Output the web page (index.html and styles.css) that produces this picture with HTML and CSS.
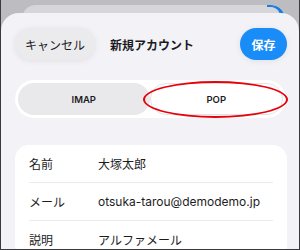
FILE: index.html
```html
<!DOCTYPE html>
<html lang="ja">
<head>
  <meta charset="UTF-8" />
  <title>新規アカウント</title>
  <meta name="viewport" content="width=device-width, initial-scale=1" />
  <link rel="stylesheet" href="styles.css">
</head>
<body>

  <div class="frame">
    <div class="backsheet">
      <span class="back-save"></span>
    </div>

    <div class="sheet">
      <div class="header">
        <button class="pill cancel">キャンセル</button>
        <h1 class="title">新規アカウント</h1>
        <button class="pill save">保存</button>
      </div>

      <div class="segmented">
        <div class="seg">IMAP</div>
        <div class="seg selected">POP</div>
        <span class="mark"></span>
      </div>

      <div class="card">
        <div class="row">
          <span class="label">名前</span>
          <span class="value">大塚太郎</span>
        </div>
        <div class="row">
          <span class="label">メール</span>
          <span class="value latin">otsuka-tarou@demodemo.jp</span>
        </div>
        <div class="row">
          <span class="label">説明</span>
          <span class="value">アルファメール</span>
        </div>
      </div>
    </div>
  </div>

</body>
</html>
```

FILE: styles.css
```css
* {
  box-sizing: border-box;
}
body {
  margin: 0;
  font-family: Inter, "Noto Sans CJK JP", sans-serif;
  color: #1c1c1e;
}
.frame {
  width: 300px;
  height: 250px;
  overflow: hidden;
  background: #bdbdc1;
  border: 1px solid #3a3a3c;
  border-top: none;
  padding-top: 5px;
  display: flex;
  flex-direction: column;
}
.backsheet {
  flex: none;
  height: 22px;
  margin: 0 14px 0 21px;
  background: #d6d6da;
  border-radius: 14px 14px 0 0;
  display: flex;
  justify-content: flex-end;
  overflow: hidden;
}
/* save button of the sheet underneath, peeking out at the corner */
.back-save {
  width: 18px;
  height: 20px;
  border-top: 2px solid #1b7fe0;
  border-right: 4px solid #1b7fe0;
  border-radius: 0 14px 0 0;
}
.sheet {
  flex: none;
  height: 260px;
  margin-top: -14px;
  background: #f2f2f7;
  border-radius: 18px 18px 0 0;
  padding: 15px 12px 0 14px;
  position: relative;
}
.header {
  display: flex;
  align-items: center;
  height: 32px;
}
.pill {
  height: 32px;
  border: none;
  border-radius: 16px;
  font-family: "Noto Sans CJK JP", sans-serif;
  font-size: 12px;
  padding: 0;
  box-shadow: 0 1px 6px rgba(0, 0, 0, 0.08);
}
.cancel {
  width: 80px;
  background: #ebebee;
  color: #1c1c1e;
}
.title {
  margin: 0 0 0 15px;
  font-size: 12px;
  font-weight: bold;
}
.save {
  width: 47px;
  margin-left: auto;
  background: #1a8cf7;
  color: white;
  font-weight: bold;
}
.segmented {
  margin: 20px 1px 0 0;
  height: 38px;
  background: white;
  border-radius: 19px;
  padding: 3px;
  display: flex;
}
.seg {
  flex: 1;
  display: flex;
  align-items: center;
  justify-content: center;
  font-size: 9.5px;
  font-weight: 600;
  border-radius: 16px;
  background: #e9e9eb;
}
.seg.selected {
  background: white;
  border: 1px solid #e4e4e6;
}
.mark {
  position: absolute;
  left: 142px;
  top: 68px;
  width: 145px;
  height: 37px;
  border: 2px solid #e8000b;
  border-radius: 50%;
}
.card {
  margin-top: 27px;
  background: white;
  border-radius: 14px;
  padding: 0 14px;
}
.row {
  height: 38px;
  display: flex;
  align-items: center;
  font-family: "Noto Sans CJK JP", sans-serif;
  font-size: 12px;
  border-bottom: 1px solid #ebebef;
}
.label {
  width: 69px;
}
.value.latin {
  font-family: Inter, sans-serif;
  font-size: 12px;
}
```
